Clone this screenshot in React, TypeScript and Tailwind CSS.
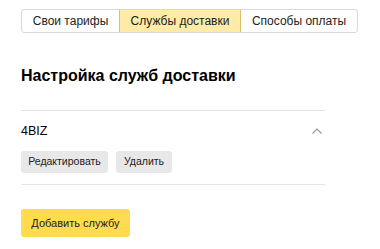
const tabs = ["Свои тарифы", "Службы доставки", "Способы оплаты"];

export default function App() {
    return (
        <div className="w-[380px] h-[249px] bg-white font-['Liberation_Sans',Arial,sans-serif] text-[#000] pl-[21px] pt-[9px]">
            <div className="flex h-[24px] w-fit rounded-[3px] border border-[#d9d9d9]">
                {tabs.map((t, i) => (
                    <div
                        key={t}
                        className={
                            i === 1
                                ? "flex items-center justify-center w-[122px] bg-[#feeba6] border-x border-[#dcc068] text-[12px] text-[#222]"
                                : i === 0
                                ? "flex items-center justify-center w-[97px] text-[12px] text-[#222]"
                                : "flex items-center justify-center w-[116px] text-[12px] text-[#222]"
                        }
                    >
                        {t}
                    </div>
                ))}
            </div>

            <h2 className="mt-[33px] text-[16px] leading-[20px] font-bold">Настройка служб доставки</h2>

            <div className="mt-[24px] w-[304px] border-t border-[#e5e5e5]">
                <div className="flex items-center justify-between h-[40px] pr-[3px]">
                    <span className="text-[12.5px]">4BIZ</span>
                    <svg width="10" height="6" viewBox="0 0 10 6" fill="none">
                        <path d="M0.5 5.5 L5 1 L9.5 5.5" stroke="#999" strokeWidth="1.2" />
                    </svg>
                </div>
                <div className="flex gap-[8px]">
                    <button className="h-[22px] w-[87px] rounded-[3px] bg-[#e8e8e8] text-[10.5px] text-[#222]">Редактировать</button>
                    <button className="h-[22px] w-[56px] rounded-[3px] bg-[#e8e8e8] text-[10.5px] text-[#222]">Удалить</button>
                </div>
                <div className="mt-[11px] border-t border-[#e5e5e5]" />
            </div>

            <button className="mt-[24px] h-[28px] w-[109px] rounded-[3px] bg-[#ffdb4d] text-[11px] text-[#222]">Добавить службу</button>
        </div>
    );
}
